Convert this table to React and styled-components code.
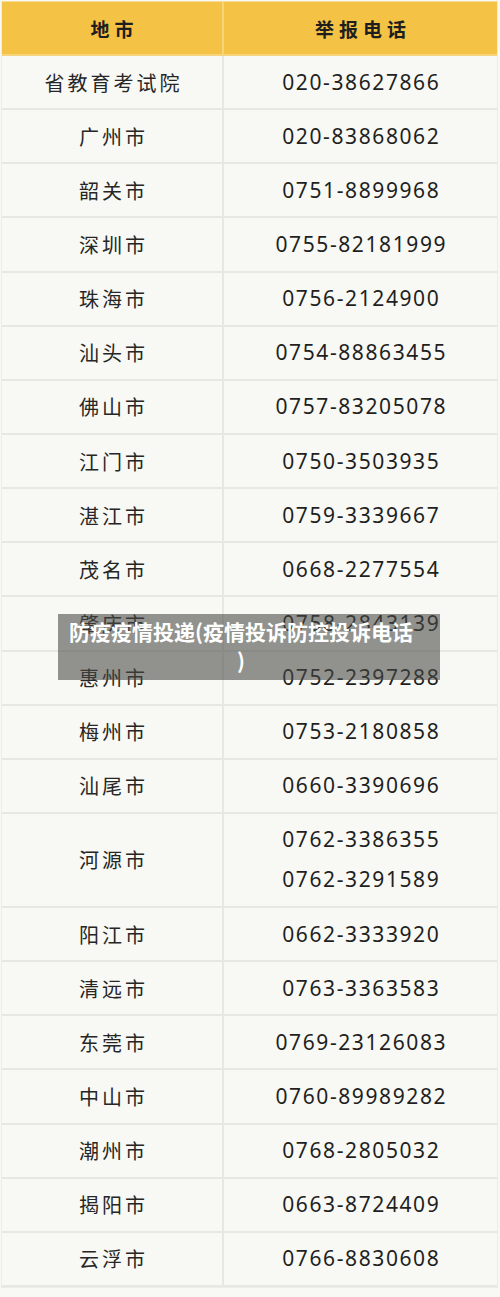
import React from "react";
import styled, { createGlobalStyle } from "styled-components";

const GlobalStyle = createGlobalStyle`
  html, body {
    margin: 0;
    padding: 0;
    background: #f8f9f4;
  }
  * { box-sizing: border-box; }
`;

const rows = [
  ["省教育考试院", ["020-38627866"]],
  ["广州市", ["020-83868062"]],
  ["韶关市", ["0751-8899968"]],
  ["深圳市", ["0755-82181999"]],
  ["珠海市", ["0756-2124900"]],
  ["汕头市", ["0754-88863455"]],
  ["佛山市", ["0757-83205078"]],
  ["江门市", ["0750-3503935"]],
  ["湛江市", ["0759-3339667"]],
  ["茂名市", ["0668-2277554"]],
  ["肇庆市", ["0758-2843139"]],
  ["惠州市", ["0752-2397288"]],
  ["梅州市", ["0753-2180858"]],
  ["汕尾市", ["0660-3390696"]],
  ["河源市", ["0762-3386355", "0762-3291589"]],
  ["阳江市", ["0662-3333920"]],
  ["清远市", ["0763-3363583"]],
  ["东莞市", ["0769-23126083"]],
  ["中山市", ["0760-89989282"]],
  ["潮州市", ["0768-2805032"]],
  ["揭阳市", ["0663-8724409"]],
  ["云浮市", ["0766-8830608"]],
];

const Page = styled.div`
  position: relative;
  width: 500px;
  min-height: 1297px;
  padding: 1px 2px 0 1px;
  background: #f8f9f4;
`;

const Table = styled.div`
  border: 1px solid #ecece6;
  border-top: 1px solid #f7dc93;
`;

const Row = styled.div`
  display: grid;
  grid-template-columns: 222px 1fr;
  height: ${(p) => p.$h}px;
  border-bottom: 2px solid ${(p) => (p.$head ? "#f6d47c" : "#e8e8e2")};
  background: ${(p) => (p.$head ? "#f4c244" : "#f8f9f4")};
`;

const Cell = styled.div`
  display: flex;
  flex-direction: column;
  align-items: center;
  justify-content: center;
  gap: 13px;
  border-right: ${(p) => (p.$first ? "2px solid" : "0")};
  border-right-color: ${(p) => (p.$head ? "#f6d47c" : "#e8e8e2")};
`;

const HeadText = styled.span`
  font-family: "Noto Sans CJK SC", "Noto Sans", sans-serif;
  font-weight: 700;
  font-size: 19px;
  letter-spacing: 5px;
  padding-left: 5px;
  color: #1e1e1e;
`;

const City = styled.span`
  font-family: "Noto Sans CJK SC", "Noto Sans", sans-serif;
  font-size: 20px;
  letter-spacing: 3px;
  padding-left: 3px;
  color: #262626;
  line-height: 27px;
`;

const Phone = styled.span`
  font-family: "Noto Sans", "Noto Sans CJK SC", sans-serif;
  font-size: 21px;
  letter-spacing: 1.6px;
  padding-left: 1.6px;
  color: #1f1f1f;
  line-height: 27px;
`;

const Banner = styled.div`
  position: absolute;
  top: 614px;
  left: 58px;
  width: 382px;
  height: 66px;
  padding: 3px 26px 0 10px;
  background: rgba(70, 70, 68, 0.58);
  color: #fff;
  font-family: "Noto Sans CJK SC", "Noto Sans", sans-serif;
  font-weight: 700;
  font-size: 21px;
  line-height: 29px;
  text-align: center;
  line-break: anywhere;
`;

export default function App() {
  return (
    <Page>
      <GlobalStyle />
      <Table>
        <Row $head $h={54}>
          <Cell $head $first>
            <HeadText>地市</HeadText>
          </Cell>
          <Cell $head>
            <HeadText>举报电话</HeadText>
          </Cell>
        </Row>
        {rows.map(([city, phones]) => (
          <Row key={city} $h={phones.length > 1 ? 94 : 54.15}>
            <Cell $first>
              <City>{city}</City>
            </Cell>
            <Cell>
              {phones.map((p) => (
                <Phone key={p}>{p}</Phone>
              ))}
            </Cell>
          </Row>
        ))}
      </Table>
      <Banner>防疫疫情投递(疫情投诉防控投诉电话)</Banner>
    </Page>
  );
}
